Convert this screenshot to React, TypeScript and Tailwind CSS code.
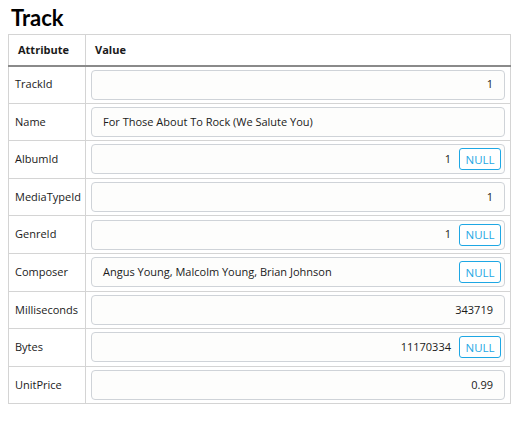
const rows: { name: string; value: string; right: boolean; nullable: boolean }[] = [
  { name: 'TrackId', value: '1', right: true, nullable: false },
  { name: 'Name', value: 'For Those About To Rock (We Salute You)', right: false, nullable: false },
  { name: 'AlbumId', value: '1', right: true, nullable: true },
  { name: 'MediaTypeId', value: '1', right: true, nullable: false },
  { name: 'GenreId', value: '1', right: true, nullable: true },
  { name: 'Composer', value: 'Angus Young, Malcolm Young, Brian Johnson', right: false, nullable: true },
  { name: 'Milliseconds', value: '343719', right: true, nullable: false },
  { name: 'Bytes', value: '11170334', right: true, nullable: true },
  { name: 'UnitPrice', value: '0.99', right: true, nullable: false },
]

export default function App() {
  return (
    <div className="px-2 pt-[4px] bg-white text-[#1a1a1a]" style={{ fontFamily: '"Open Sans", sans-serif' }}>
      <h1 className="pl-[3px] text-[22px] font-bold leading-[28px] text-black" style={{ fontFamily: 'Lato, sans-serif' }}>
        Track
      </h1>
      <table className="w-[503px] mt-[2px] border-collapse text-[11px]">
        <thead>
          <tr className="h-[31px]">
            <th className="w-[77px] border border-[#d4d4d4] border-b-2 border-b-[#8a8a8a] text-left pl-[9px] font-bold">Attribute</th>
            <th className="border border-[#d4d4d4] border-b-2 border-b-[#8a8a8a] text-left pl-[9px] font-bold">Value</th>
          </tr>
        </thead>
        <tbody>
          {rows.map(r => (
            <tr key={r.name} className="h-[37.6px]">
              <td className="border border-[#d4d4d4] pl-[6px]">{r.name}</td>
              <td className="border border-[#d4d4d4] px-[5px]">
                <div className="h-[30px] flex items-center rounded-[4px] border border-[#cfd3d8] bg-[#fdfdfc] pl-[11px] pr-[3px]">
                  <span className={r.right ? 'flex-1 text-right pr-[8px]' : 'flex-1'}>{r.value}</span>
                  {r.nullable && (
                    <button className="h-[22px] w-[42px] rounded-[3px] border border-[#1ea7e4] text-[#1ea7e4] text-[11.5px] leading-none bg-white">
                      NULL
                    </button>
                  )}
                </div>
              </td>
            </tr>
          ))}
        </tbody>
      </table>
    </div>
  )
}
